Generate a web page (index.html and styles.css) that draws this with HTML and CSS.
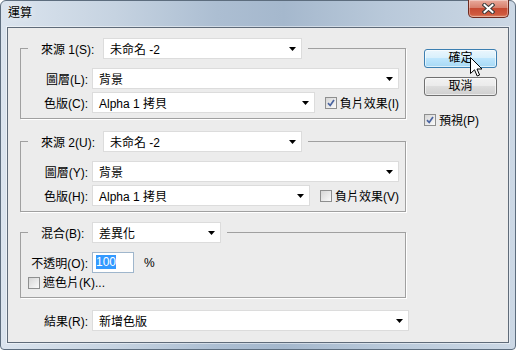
FILE: index.html
```html
<!DOCTYPE html>
<html lang="zh-Hant">
<head>
    <meta charset="UTF-8">
    <title>運算</title>
    <link rel="stylesheet" href="styles.css">
</head>
<body>
    <div class="window">
        <div class="titlebar">
            <span class="title">運算</span>
            <div class="close">
                <svg width="13" height="11" viewBox="0 0 13 11">
                    <path d="M2.5 2 L10.5 9 M10.5 2 L2.5 9" stroke="#3a3a3a" stroke-width="4" stroke-linecap="square"/>
                    <path d="M2.5 2 L10.5 9 M10.5 2 L2.5 9" stroke="#fff" stroke-width="2" stroke-linecap="square"/>
                </svg>
            </div>
        </div>
        <div class="client">
            <div class="main">
                <fieldset class="group">
                    <legend>
                        <span class="src-lbl">來源 1(S):</span>
                        <div class="combo src"><span>未命名 -2</span><svg class="arrow" width="7" height="4"><polygon points="0,0 7,0 3.5,4"/></svg></div>
                    </legend>
                    <div class="row">
                        <span class="lbl">圖層(L):</span>
                        <div class="combo grow"><span>背景</span><svg class="arrow" width="7" height="4"><polygon points="0,0 7,0 3.5,4"/></svg></div>
                    </div>
                    <div class="row">
                        <span class="lbl">色版(C):</span>
                        <div class="combo grow"><span>Alpha 1 拷貝</span><svg class="arrow" width="7" height="4"><polygon points="0,0 7,0 3.5,4"/></svg></div>
                        <label class="check invert"><span class="box"><svg width="8" height="8"><path d="M1 4.2 L3.2 6.5 L7 1" fill="none" stroke="#4a64a0" stroke-width="1.7"/></svg></span>負片效果(I)</label>
                    </div>
                </fieldset>

                <fieldset class="group second">
                    <legend>
                        <span class="src-lbl">來源 2(U):</span>
                        <div class="combo src"><span>未命名 -2</span><svg class="arrow" width="7" height="4"><polygon points="0,0 7,0 3.5,4"/></svg></div>
                    </legend>
                    <div class="row">
                        <span class="lbl">圖層(Y):</span>
                        <div class="combo grow"><span>背景</span><svg class="arrow" width="7" height="4"><polygon points="0,0 7,0 3.5,4"/></svg></div>
                    </div>
                    <div class="row">
                        <span class="lbl">色版(H):</span>
                        <div class="combo grow"><span>Alpha 1 拷貝</span><svg class="arrow" width="7" height="4"><polygon points="0,0 7,0 3.5,4"/></svg></div>
                        <label class="check invert"><span class="box"></span>負片效果(V)</label>
                    </div>
                </fieldset>

                <fieldset class="group blend">
                    <legend>
                        <span class="mode-lbl">混合(B):</span>
                        <div class="combo mode"><span>差異化</span><svg class="arrow" width="7" height="4"><polygon points="0,0 7,0 3.5,4"/></svg></div>
                    </legend>
                    <div class="row">
                        <span class="lbl">不透明(O):</span>
                        <div class="opacity"><span class="selected">100</span></div>
                        <span class="pct">%</span>
                    </div>
                    <div class="row mask">
                        <label class="check"><span class="box"></span>遮色片(K)...</label>
                    </div>
                </fieldset>

                <div class="row result">
                    <span class="lbl">結果(R):</span>
                    <div class="combo grow"><span>新增色版</span><svg class="arrow" width="7" height="4"><polygon points="0,0 7,0 3.5,4"/></svg></div>
                </div>
            </div>

            <div class="side">
                <button class="btn default">確定</button>
                <button class="btn">取消</button>
                <label class="check preview"><span class="box"><svg width="8" height="8"><path d="M1 4.2 L3.2 6.5 L7 1" fill="none" stroke="#4a64a0" stroke-width="1.7"/></svg></span>預視(P)</label>
            </div>
        </div>

        <!-- pointeur de souris au-dessus du bouton -->
        <svg class="cursor" width="13" height="21" viewBox="0 0 13 21">
            <path d="M0.5 0.5 L0.5 16.5 L4.5 12.8 L7.2 19 L9.6 18 L7 12 L12 12 Z" fill="#fff" stroke="#000" stroke-width="1" stroke-linejoin="miter"/>
        </svg>
    </div>
</body>
</html>
```

FILE: styles.css
```css
body {
    margin: 0;
    font-family: "Liberation Sans", "Noto Sans CJK TC", sans-serif;
    font-size: 12px;
    color: #000;
}

.window {
    width: 516px;
    height: 350px;
    box-sizing: border-box;
    border: 1px solid #5d6d7e;
    border-radius: 6px 6px 4px 4px;
    padding: 0 6px 6px;
    display: flex;
    flex-direction: column;
    position: relative;
    background: linear-gradient(to right, #dbe4ee 0%, #c6d3e1 22%, #acbed2 42%, #a5b8cd 55%, #b9c9da 75%, #ccd8e5 100%);
}

.titlebar {
    height: 26px;
    display: flex;
    justify-content: space-between;
    align-items: flex-start;
}

.title {
    padding: 4px 0 0 1px;
    line-height: 16px;
    text-shadow: 0 0 6px rgba(255, 255, 255, 0.9);
}

.close {
    width: 41px;
    height: 18px;
    margin-top: -1px;
    box-sizing: border-box;
    border: 1px solid #6e2a1f;
    border-top: none;
    border-radius: 0 0 5px 5px;
    background: linear-gradient(#e9aa9c 0%, #d8806d 45%, #c64a32 50%, #cf5a3f 85%, #dd8a6a 100%);
    box-shadow: inset 0 0 0 1px rgba(255, 255, 255, 0.35);
    display: flex;
    align-items: center;
    justify-content: center;
}

.client {
    flex: 1;
    display: flex;
    padding: 10px 0 0 12px;
    border: 1px solid #5f6b79;
    background: #ececec;
    box-shadow: 0 0 0 1px rgba(255, 255, 255, 0.45);
}

.main {
    width: 389px;
}

.group {
    margin: 0;
    width: 386px;
    box-sizing: border-box;
    border: 1px solid #a0a0a0;
    box-shadow: 1px 1px 0 #fff;
    padding: 9px 6px 5px 5px;
}

.group legend {
    display: flex;
    align-items: center;
    gap: 6px;
    margin-left: 2px;
    padding: 0 6px 0 13px;
}

.src-lbl {
    width: 56px;
    white-space: nowrap;
}

.mode-lbl {
    width: 45px;
    white-space: nowrap;
}

.second {
    margin-top: 12px;
}

.blend {
    margin-top: 10px;
    padding-bottom: 7px;
}

.combo {
    height: 21px;
    box-sizing: border-box;
    border: 1px solid #dcdcdc;
    background: #fff;
    display: flex;
    align-items: center;
    justify-content: space-between;
    padding: 0 5px 0 6px;
    white-space: nowrap;
}

.combo.src {
    width: 199px;
}

.combo.mode {
    width: 129px;
}

.grow {
    flex: 1;
}

.arrow {
    flex: none;
    fill: #000;
}

.row {
    display: flex;
    align-items: center;
    gap: 4px;
}

.row + .row {
    margin-top: 3px;
}

.lbl {
    width: 62px;
    flex: none;
    text-align: right;
    white-space: nowrap;
}

.result {
    margin-top: 12px;
}

.result .lbl {
    width: 68px;
}

.opacity {
    width: 42px;
    height: 21px;
    box-sizing: border-box;
    border: 1px solid #9fb6cc;
    background: #fff;
    padding: 2px 0 0 3px;
    line-height: 15px;
}

.selected {
    background: #3399ff;
    color: #fff;
}

.pct {
    margin-left: 6px;
}

.mask {
    line-height: 14px;
}

.mask .check {
    margin-left: 2px;
}

.check {
    display: flex;
    align-items: center;
    gap: 3px;
    white-space: nowrap;
}

.invert {
    margin-left: 6px;
}

.box {
    width: 12px;
    height: 12px;
    box-sizing: border-box;
    border: 1px solid #8e8f8f;
    background: linear-gradient(135deg, #d6d6d6, #fafafa);
    display: flex;
    align-items: center;
    justify-content: center;
}

.side {
    margin-left: 15px;
    padding-top: 11px;
}

.btn {
    display: block;
    width: 73px;
    height: 19px;
    box-sizing: border-box;
    padding: 0;
    font: inherit;
    line-height: 15px;
    color: #000;
    border: 1px solid #707070;
    border-radius: 3px;
    background: linear-gradient(#f2f2f2 0%, #ebebeb 45%, #dddddd 50%, #cfcfcf 100%);
    box-shadow: inset 0 0 0 1px rgba(255, 255, 255, 0.6);
}

.btn.default {
    margin-bottom: 9px;
    border-color: #3c7fb1;
    background: linear-gradient(#eaf6fd 0%, #d9f0fc 45%, #bee6fd 50%, #a7d9f5 100%);
}

.preview {
    margin-top: 15px;
}

.cursor {
    position: absolute;
    left: 469px;
    top: 56px;
}
```
